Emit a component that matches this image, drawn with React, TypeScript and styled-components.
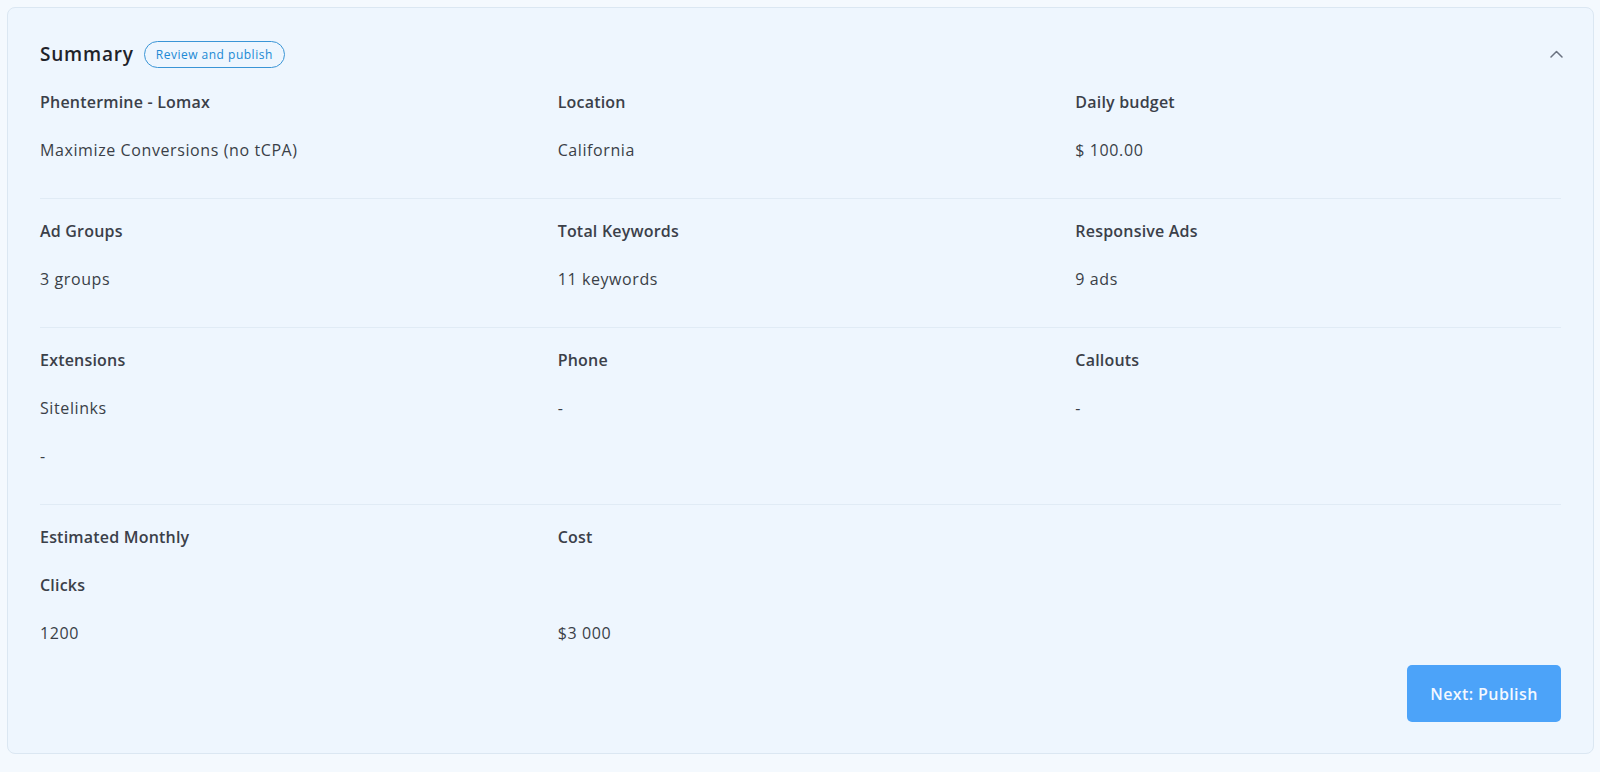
import React from "react";
import styled, { createGlobalStyle } from "styled-components";

const GlobalStyle = createGlobalStyle`
  body {
    margin: 0;
    background: #f4f9fe;
    font-family: "Open Sans", "Liberation Sans", sans-serif;
    color: #374151;
  }
`;

const Page = styled.div`
  padding: 7px 6px 7px 7px;
`;

const Card = styled.section`
  background: #eef6fe;
  border: 1px solid #dbe7f2;
  border-radius: 8px;
  padding: 32px 32px 31px;
`;

const Header = styled.div`
  display: flex;
  align-items: center;
  justify-content: space-between;
  height: 28px;
  margin-bottom: 22px;
`;

const TitleGroup = styled.div`
  display: flex;
  align-items: center;
  gap: 10px;
`;

const Title = styled.h2`
  margin: 0;
  font-size: 19px;
  font-weight: 600;
  letter-spacing: 0.8px;
  color: #1f2329;
`;

const Badge = styled.span`
  display: inline-flex;
  align-items: center;
  height: 25px;
  padding: 0 11px;
  border: 1px solid #3a95d6;
  border-radius: 999px;
  font-size: 12px;
  letter-spacing: 0.5px;
  color: #2089d4;
`;

const Collapse = styled.button`
  display: flex;
  align-items: center;
  padding: 0;
  margin-right: -2px;
  border: none;
  background: none;
  color: #6b7280;
  cursor: pointer;
`;

const Section = styled.div<{ $first?: boolean; $last?: boolean }>`
  display: grid;
  grid-template-columns: repeat(3, 1fr);
  column-gap: 32px;
  padding: ${(p) => (p.$first ? "0" : "20px")} 0 ${(p) => (p.$last ? "0" : "36px")};
  border-bottom: ${(p) => (p.$last ? "none" : "1px solid #e0ebf5")};
`;

const Column = styled.div`
  display: flex;
  flex-direction: column;
  gap: 24px;
`;

const Label = styled.div`
  font-size: 16px;
  line-height: 24px;
  font-weight: 600;
  letter-spacing: 0.2px;
  color: #3b4049;
`;

const Value = styled.div`
  font-size: 16px;
  line-height: 24px;
  letter-spacing: 0.6px;
  color: #3a3f47;
`;

const Footer = styled.div`
  display: flex;
  justify-content: flex-end;
  margin-top: 20px;
`;

const PrimaryButton = styled.button`
  width: 154px;
  height: 57px;
  border: none;
  border-radius: 5px;
  background: #4ca3f9;
  color: #f3f8ff;
  font-family: inherit;
  font-size: 16px;
  font-weight: 600;
  letter-spacing: 0.4px;
  cursor: pointer;
`;

type Item = { label: string[]; values: string[] };

const sections: Item[][] = [
  [
    { label: ["Phentermine - Lomax"], values: ["Maximize Conversions (no tCPA)"] },
    { label: ["Location"], values: ["California"] },
    { label: ["Daily budget"], values: ["$ 100.00"] },
  ],
  [
    { label: ["Ad Groups"], values: ["3 groups"] },
    { label: ["Total Keywords"], values: ["11 keywords"] },
    { label: ["Responsive Ads"], values: ["9 ads"] },
  ],
  [
    { label: ["Extensions"], values: ["Sitelinks", "-"] },
    { label: ["Phone"], values: ["-"] },
    { label: ["Callouts"], values: ["-"] },
  ],
  [
    { label: ["Estimated Monthly", "Clicks"], values: ["1200"] },
    { label: ["Cost"], values: ["", "$3 000"] },
  ],
];

const ChevronUp = () => (
  <svg width="13" height="8" viewBox="0 0 13 8" fill="none">
    <polyline
      points="1,7 6.5,1.5 12,7"
      stroke="currentColor"
      strokeWidth="1.5"
      strokeLinecap="round"
      strokeLinejoin="round"
    />
  </svg>
);

export default function App() {
  return (
    <Page>
      <GlobalStyle />
      <Card>
        <Header>
          <TitleGroup>
            <Title>Summary</Title>
            <Badge>Review and publish</Badge>
          </TitleGroup>
          <Collapse aria-label="Collapse">
            <ChevronUp />
          </Collapse>
        </Header>
        {sections.map((items, i) => (
          <Section key={i} $first={i === 0} $last={i === sections.length - 1}>
            {items.map((item, j) => (
              <Column key={j}>
                {item.label.map((l) => (
                  <Label key={l}>{l}</Label>
                ))}
                {item.values.map((v, k) => (
                  <Value key={k}>{v || "\u00a0"}</Value>
                ))}
              </Column>
            ))}
          </Section>
        ))}
        <Footer>
          <PrimaryButton>Next: Publish</PrimaryButton>
        </Footer>
      </Card>
    </Page>
  );
}
